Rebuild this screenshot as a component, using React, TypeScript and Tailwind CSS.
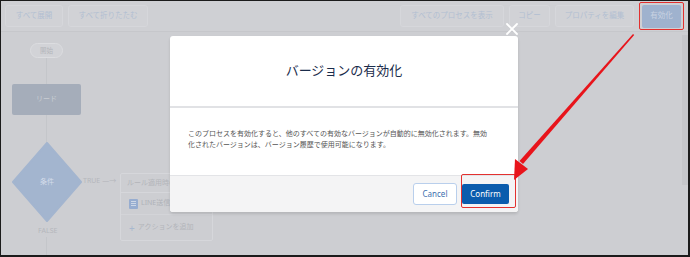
import React from 'react';

const jp = { fontFamily: '"Noto Sans", "Noto Sans CJK JP", sans-serif' };

function ToolButton({ label, className = '' }: { label: string; className?: string }) {
  return (
    <div
      className={`h-[22px] flex items-center justify-center whitespace-nowrap rounded-[3px] border border-[#d6d7db] bg-[#d1d2d6] text-[7.5px] text-[#b1bfd2] ${className}`}
    >
      {label}
    </div>
  );
}

export default function App() {
  return (
    <div
      className="relative w-[690px] h-[257px] overflow-hidden bg-[#cdced2] border-t border-l border-r-2 border-b-2 border-[#1b1b1b]"
      style={jp}
    >
      {/* toolbar */}
      <div className="h-[31px] flex items-center justify-between px-[4px] border-b border-[#c6c7cb] bg-[#cfd0d4]">
        <div className="flex gap-[5px]">
          <ToolButton label="すべて展開" className="w-[58px]" />
          <ToolButton label="すべて折りたたむ" className="w-[80px]" />
        </div>
        <div className="flex items-center gap-[5px]">
          <ToolButton label="すべてのプロセスを表示" className="w-[104px]" />
          <ToolButton label="コピー" className="w-[41px]" />
          <ToolButton label="プロパティを編集" className="w-[79px]" />
          <div className="w-[45px] h-[28px] flex items-center justify-center border border-[#e2302f] rounded-[2px]">
            <div className="w-[39px] h-[23px] flex items-center justify-center rounded-[2px] bg-[#9fb2ce] text-[7.5px] text-[#c9d3e2]">
              有効化
            </div>
          </div>
        </div>
      </div>

      {/* diagram canvas */}
      <div className="relative h-[224px]">
        <div className="absolute left-[29px] top-[11px] w-[33px] h-[15px] rounded-full border border-[#dcdde0] bg-[#d2d3d7] flex items-center justify-center text-[6.5px] text-[#b3b5ba]">
          開始
        </div>
        <div className="absolute left-[45px] top-[26px] w-px h-[27px] bg-[#c4c6ca]" />
        <div className="absolute left-[11px] top-[52px] w-[69px] h-[31px] rounded-[2px] bg-[#a5adba] flex items-center justify-center text-[7px] text-[#c9cdd4]">
          リード
        </div>
        <div className="absolute left-[45px] top-[83px] w-px h-[30px] bg-[#c4c6ca]" />
        <div className="absolute left-[11px] top-[110px] w-[70px] h-[80px]">
          <svg width="70" height="80" viewBox="0 0 70 80">
            <polygon points="35,1 69,40 35,79 1,40" fill="#a3b5cf" stroke="#a3b5cf" strokeWidth="2" strokeLinejoin="round" />
          </svg>
          <div className="absolute inset-0 flex items-center justify-center text-[7px] text-[#d4dcea]">条件</div>
        </div>
        <div className="absolute left-[82px] top-[144px] text-[7px] text-[#b5b7bc] flex items-center gap-[2px]">
          <span>TRUE</span>
          <span>—→</span>
        </div>
        <div className="absolute left-[37px] top-[194px] text-[7px] text-[#b5b7bc]">FALSE</div>
        <div className="absolute left-[45px] top-[205px] w-px h-[20px] bg-[#c4c6ca]" />
        <div className="absolute left-[119px] top-[141px] w-[93px] h-[68px] rounded-[2px] border border-[#d6d7db] flex flex-col">
          <div className="h-[19px] border-b border-[#d6d7db] flex items-center px-[6px] text-[7px] text-[#b3b5ba] whitespace-nowrap overflow-hidden">
            ルール適用時の
          </div>
          <div className="h-[21px] flex items-center gap-[3px] px-[8px] text-[7px] text-[#b0b3b9]">
            <span className="w-[9px] h-[10px] rounded-[1px] bg-[#97add0] flex flex-col justify-center gap-[1px] px-[2px]">
              <span className="h-px bg-[#cdd7e6]" />
              <span className="h-px bg-[#cdd7e6]" />
              <span className="h-px bg-[#cdd7e6]" />
            </span>
            LINE送信
          </div>
          <div className="flex-1 flex items-center gap-[3px] px-[8px] text-[7px] text-[#b3b5ba] border-t border-[#d3d4d8]">
            <span className="text-[10px] leading-none text-[#a8b8cf]">+</span>
            アクションを追加
          </div>
        </div>
        {/* scrollbar */}
        <div className="absolute right-0 top-[3px] w-[6px] h-[150px] bg-[#c5c6ca]" />
      </div>

      {/* close icon */}
      <svg className="absolute left-[505px] top-[22px]" width="12" height="12" viewBox="0 0 12 12">
        <path d="M1 1 L11 11 M11 1 L1 11" stroke="#ffffff" strokeWidth="1.8" strokeLinecap="round" />
      </svg>

      {/* modal */}
      <div className="absolute left-[169px] top-[35px] w-[348px] h-[176px] bg-white rounded-[3px] shadow-[0_2px_3px_rgba(0,0,0,0.12)] flex flex-col overflow-hidden">
        <div className="h-[72px] flex items-center justify-center border-b-2 border-[#e1e2e5] text-[13px] text-[#1a2c4b]">
          バージョンの有効化
        </div>
        <div className="h-[67px] px-[18px] pt-[20px] text-[7px] leading-[11px] text-[#555555]">
          このプロセスを有効化すると、他のすべての有効なバージョンが自動的に無効化されます。無効
          <br />
          化されたバージョンは、バージョン履歴で使用可能になります。
        </div>
        <div className="flex-1 bg-[#f4f4f5] border-t border-[#e3e4e7] flex items-center justify-end gap-[5px] pr-[9px]">
          <div className="w-[44px] h-[22px] rounded-[3px] border border-[#b9cfec] bg-white flex items-center justify-center text-[8px] text-[#3d6fae]">
            Cancel
          </div>
          <div className="w-[47px] h-[20px] rounded-[2px] bg-[#0b5cad] flex items-center justify-center text-[8px] text-white">
            Confirm
          </div>
        </div>
      </div>

      {/* red highlight around confirm */}
      <div className="absolute left-[460px] top-[173px] w-[55px] h-[34px] border border-[#e3312f] rounded-[2px]" />

      {/* red arrow */}
      <svg className="absolute left-0 top-0 pointer-events-none" width="690" height="257" viewBox="0 0 690 257">
        <polygon points="632,33 633.2,34 522,163 518.5,160" fill="#e8141b" />
        <polygon points="513,179 514,158 527,168" fill="#e8141b" />
      </svg>
    </div>
  );
}
